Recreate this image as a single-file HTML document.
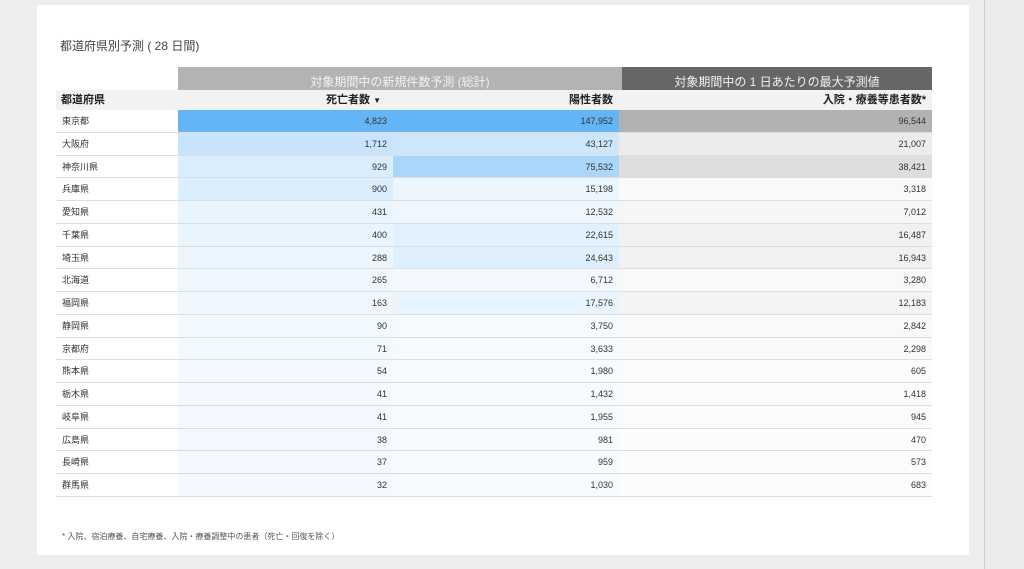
<!DOCTYPE html>
<html><head><meta charset="utf-8"><style>
*{margin:0;padding:0;box-sizing:border-box}
body{width:1024px;height:569px;background:#eeeeee;position:relative;overflow:hidden;font-family:"Liberation Sans","Noto Sans CJK JP",sans-serif;color:#333}
.card{position:absolute;left:37px;top:5px;width:932px;height:550px;background:#fff}
.vline{position:absolute;left:984px;top:0;width:1px;height:569px;background:#d0d0d0}
.rbg{position:absolute;left:985px;top:0;width:39px;height:569px;background:#ececec}
.title{position:absolute;left:60px;top:37px;font-size:12px;color:#444}
.g1{position:absolute;left:178px;top:67px;width:444px;height:23px;background:#b3b3b3;color:#f2f2f2;font-size:12px;text-align:center;line-height:30px}
.g2{position:absolute;left:622px;top:67px;width:310px;height:23px;background:#666;color:#f2f2f2;font-size:12px;text-align:center;line-height:30px}
.hdr{position:absolute;left:56px;top:90px;width:876px;height:20px;background:#f2f2f2;font-size:11px;font-weight:bold;color:#222}
.hdr div{position:absolute;top:0;line-height:20px}
.rows{position:absolute;left:56px;top:110px;width:876px}
.r{height:22.76px;position:relative;border-bottom:1px solid #dedede;font-size:9px;color:#333}
.r div{position:absolute;top:0;height:100%;line-height:22px}
.n{left:6px}
.d{left:122px;width:215px;text-align:right;padding-right:6px}
.p{left:337px;width:226px;text-align:right;padding-right:6px}
.h{left:563px;width:313px;text-align:right;padding-right:6px}
.foot{position:absolute;left:62px;top:531px;font-size:8px;color:#555}
</style></head><body>
<div class="card"></div><div class="vline"></div><div class="rbg"></div>
<div class="title">都道府県別予測 ( 28 日間)</div>
<div class="g1">対象期間中の新規件数予測 (総計)</div>
<div class="g2">対象期間中の 1 日あたりの最大予測値</div>
<div class="hdr"><div style="left:5px">都道府県</div><div style="left:270px">死亡者数 <span style="font-size:8px">▼</span></div><div style="right:319px">陽性者数</div><div style="right:6px">入院・療養等患者数*</div></div>
<div class="rows">
<div class="r"><div class="n">東京都</div><div class="d" style="background:rgba(100,181,246,1)">4,823</div><div class="p" style="background:rgba(100,181,246,1)">147,952</div><div class="h" style="background:rgba(0,0,0,.3)">96,544</div></div>
<div class="r"><div class="n">大阪府</div><div class="d" style="background:rgba(100,181,246,.36)">1,712</div><div class="p" style="background:rgba(100,181,246,.33)">43,127</div><div class="h" style="background:rgba(0,0,0,.075)">21,007</div></div>
<div class="r"><div class="n">神奈川県</div><div class="d" style="background:rgba(100,181,246,.24)">929</div><div class="p" style="background:rgba(100,181,246,.55)">75,532</div><div class="h" style="background:rgba(0,0,0,.13)">38,421</div></div>
<div class="r"><div class="n">兵庫県</div><div class="d" style="background:rgba(100,181,246,.23)">900</div><div class="p" style="background:rgba(100,181,246,.12)">15,198</div><div class="h" style="background:rgba(0,0,0,.025)">3,318</div></div>
<div class="r"><div class="n">愛知県</div><div class="d" style="background:rgba(100,181,246,.15)">431</div><div class="p" style="background:rgba(100,181,246,.11)">12,532</div><div class="h" style="background:rgba(0,0,0,.035)">7,012</div></div>
<div class="r"><div class="n">千葉県</div><div class="d" style="background:rgba(100,181,246,.14)">400</div><div class="p" style="background:rgba(100,181,246,.2)">22,615</div><div class="h" style="background:rgba(0,0,0,.055)">16,487</div></div>
<div class="r"><div class="n">埼玉県</div><div class="d" style="background:rgba(100,181,246,.12)">288</div><div class="p" style="background:rgba(100,181,246,.21)">24,643</div><div class="h" style="background:rgba(0,0,0,.055)">16,943</div></div>
<div class="r"><div class="n">北海道</div><div class="d" style="background:rgba(100,181,246,.11)">265</div><div class="p" style="background:rgba(100,181,246,.08)">6,712</div><div class="h" style="background:rgba(0,0,0,.025)">3,280</div></div>
<div class="r"><div class="n">福岡県</div><div class="d" style="background:rgba(100,181,246,.1)">163</div><div class="p" style="background:rgba(100,181,246,.14)">17,576</div><div class="h" style="background:rgba(0,0,0,.045)">12,183</div></div>
<div class="r"><div class="n">静岡県</div><div class="d" style="background:rgba(100,181,246,.09)">90</div><div class="p" style="background:rgba(100,181,246,.07)">3,750</div><div class="h" style="background:rgba(0,0,0,.022)">2,842</div></div>
<div class="r"><div class="n">京都府</div><div class="d" style="background:rgba(100,181,246,.085)">71</div><div class="p" style="background:rgba(100,181,246,.07)">3,633</div><div class="h" style="background:rgba(0,0,0,.02)">2,298</div></div>
<div class="r"><div class="n">熊本県</div><div class="d" style="background:rgba(100,181,246,.08)">54</div><div class="p" style="background:rgba(100,181,246,.06)">1,980</div><div class="h" style="background:rgba(0,0,0,.015)">605</div></div>
<div class="r"><div class="n">栃木県</div><div class="d" style="background:rgba(100,181,246,.08)">41</div><div class="p" style="background:rgba(100,181,246,.06)">1,432</div><div class="h" style="background:rgba(0,0,0,.017)">1,418</div></div>
<div class="r"><div class="n">岐阜県</div><div class="d" style="background:rgba(100,181,246,.08)">41</div><div class="p" style="background:rgba(100,181,246,.06)">1,955</div><div class="h" style="background:rgba(0,0,0,.015)">945</div></div>
<div class="r"><div class="n">広島県</div><div class="d" style="background:rgba(100,181,246,.08)">38</div><div class="p" style="background:rgba(100,181,246,.055)">981</div><div class="h" style="background:rgba(0,0,0,.013)">470</div></div>
<div class="r"><div class="n">長崎県</div><div class="d" style="background:rgba(100,181,246,.08)">37</div><div class="p" style="background:rgba(100,181,246,.055)">959</div><div class="h" style="background:rgba(0,0,0,.013)">573</div></div>
<div class="r"><div class="n">群馬県</div><div class="d" style="background:rgba(100,181,246,.075)">32</div><div class="p" style="background:rgba(100,181,246,.055)">1,030</div><div class="h" style="background:rgba(0,0,0,.013)">683</div></div>
</div>
<div class="foot">* 入院、宿泊療養、自宅療養、入院・療養調整中の患者（死亡・回復を除く）</div>
</body></html>
